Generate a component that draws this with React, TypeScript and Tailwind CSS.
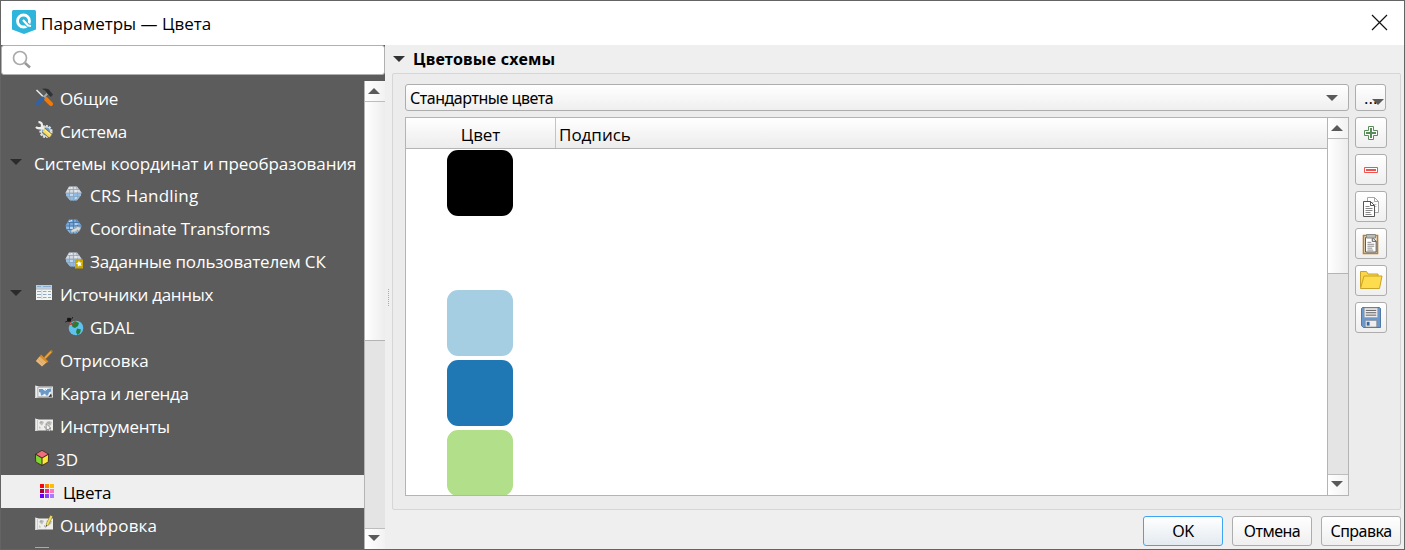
import type { ReactNode } from 'react';

const Svg = ({ children, w = 18, h = 18, box = '0 0 18 18', className = '' }: { children: ReactNode; w?: number; h?: number; box?: string; className?: string }) => (
  <svg width={w} height={h} viewBox={box} className={`shrink-0 ${className}`}>{children}</svg>
);

const ToolsIcon = () => (
  <Svg>
    <path d="M1.500 2 9 9.500" stroke="#e8e8e8" strokeWidth="1.6" />
    <path d="M10.500 10.500 16 16" stroke="#f57900" strokeWidth="4" strokeLinecap="round" />
    <path d="M12.500 5.500 8 10" stroke="#a9adb0" strokeWidth="1.8" />
    <path d="M7.500 10.500 2.500 15.500" stroke="#33629e" strokeWidth="4" strokeLinecap="round" />
    <path d="M7 1 C11 0 13.500 .5 15 3 L18 6.500 16 9 12.500 6 C12 3.500 10 2.500 7 1Z" fill="#2e3436" />
  </Svg>
);
const SystemIcon = () => (
  <Svg>
    <circle cx="11" cy="10.500" r="5.600" fill="#6e9ccb" stroke="#e4e4de" strokeWidth="2" strokeDasharray="2 1.200" />
    <circle cx="11" cy="10.500" r="4.600" fill="none" stroke="#dcdcd8" strokeWidth="1.200" />
    <path d="M1 6C3 8 5.500 7.500 7 6L10 9.500" stroke="#eeeeec" strokeWidth="2.400" fill="none" />
    <path d="M3.500 1.300C6 .8 7.500 3 6.800 5.500" stroke="#eeeeec" strokeWidth="2.200" fill="none" />
    <path d="M8.500 9 15.500 15" stroke="#77651c" strokeWidth="5" />
    <path d="M8.500 9 15.500 15" stroke="#f5dc6a" strokeWidth="3.800" />
    <path d="M10 9 15.500 13.500" stroke="#fff3a5" strokeWidth="1" />
  </Svg>
);
const GlobeIcon = ({ kind }: { kind?: 'shift' | 'star' }) => (
  <Svg className="overflow-visible">
    <path d="M4 1.500h8l4.500 6-.8 3-3.700 4.500H5L1.500 11 .6 7.500z" fill={kind === 'shift' ? '#78a8db' : '#d8dbe0'} />
    <path d="M.8 8h15.500l-.8 3-3.700 4.500H5.200L1.500 11z" fill="#8fbde8" />
    <path d="M8.400 1v15M2.500 4.500h12M.7 8h15.500M2 11.500h13M5.500 1.500C4 6 4 11 6 15.500M11.400 1.500C13 6 13 11 11 15.500" stroke={kind === 'shift' ? '#42729f' : '#8ba3ba'} strokeWidth=".8" fill="none" />
    <path d="M4 3.500 7 2.500M10 6h3M5 10h3M10 13h2" stroke="#f0f6ff" strokeWidth="1" />
    {kind === 'shift' && <path d="M5.500 14C6.500 10.500 9.500 11 11.500 9.500L11 8 16 9.500 14 13.500 12.500 12C11 14 8.500 14.500 5.500 14Z" fill="#d7dbd9" stroke="#788a91" strokeWidth=".5" />}
    {kind === 'star' && <><rect x="10" y="8.500" width="8" height="9" fill="#c9a800" /><path d="m14 9.500.8 2.100 2.200-.1-1.300 1.600 1 2-2-.7-1.900 1.300.1-2.300-1.900-1.200 2.200-.6z" fill="#fff" /></>}
  </Svg>
);
const TableIcon = () => (
  <Svg>
    <rect x="1" y="1" width="16" height="15" fill="#f2f3f3" />
    <path d="M1 1h16v3.500H1z" fill="#b4d0ec" /><path d="M2 2.500h4M8 2.500h8" stroke="#86add0" />
    <path d="M1 5h16" stroke="#8f979d" strokeWidth=".7" />
    <path d="M2 7.500h4M2 10.500h4M2 13.500h4M8 7.500h3.500M8 10.500h3.500M8 13.500h3.500M13 7.500h3M13 10.500h3M13 13.500h3" stroke="#90a9c0" strokeWidth="1" />
    <path d="M6.800 5v10" stroke="#c9d2d9" />
  </Svg>
);
const GdalIcon = () => (
  <Svg className="overflow-visible">
    <circle cx="11" cy="11" r="7.300" fill="#5fc1ee" />
    <path d="M6.500 6.500 10 4l4 2-1 3-3 2-2.500-1zM12 11.500l4 1-1 3.500-2.500 2L11 15z" fill="#277d36" />
    <path d="m3.500 3 5 6M4 8l6.500-2.500" stroke="#a7473c" strokeWidth="1" />
    <path d="M2.500 1.300h3v3h-3zM7 .7l1-.2M.2 5l2-.7M5.500 2.500l2-1" fill="#111" stroke="#111" strokeWidth=".8" />
  </Svg>
);
const BrushIcon = () => (
  <Svg>
    <path d="M16.300 1.500 10.500 7.500" stroke="#b87820" strokeWidth="2.800" strokeLinecap="round" />
    <path d="M16 1.800 10 8" stroke="#f0a63c" strokeWidth="1.500" />
    <path d="m6 4.500 7.500 7-2 1.500-7-6z" fill="#d68c29" /><path d="m4.500 6.500 7 6-4.500 4L.800 11z" fill="#e8b778" />
    <path d="m3 9 5 5M5 8.500l4 4" stroke="#d79b58" strokeWidth=".6" />
  </Svg>
);
const MapIcon = ({ kind }: { kind: 'legend' | 'tools' | 'edit' }) => (
  <Svg box="0 -1 18 18">
    <path d="M0 1.500 4 2.500h14v11H4L0 14z" fill="#eeeeec" /><path d="M.5 2v11.500M2.500 3v10" stroke="#ccc" />
    {kind === 'legend'
      ? <><path d="M3 3.500h14v9H3z" fill="#eef4fa" stroke="#b5b5b5" strokeWidth=".8" /><path d="M4 5h4l2 2 2-2 4-.500v3l-2 1-1 3h-2l-1-2-3 2H6l-.5-3L4 8z" fill="#6b99c7" /><path d="M8 5l3 1 1-1" stroke="#fff" /><path d="m16 9.500-2.500 3.500 3.500-.5z" fill="#333" /></>
      : <><path d="M4 5.500 7 4l2 1-1 2-1 1.500L5 7zM9 9l2 1-.5 3zM11 5l3-1 3 1-1 3-2 1-1-2zM4 9l2 2-1.500 1z" fill="#bdbdba" /><path d="M5 5h2M12 6h3M9 10h1" stroke="#9c9e9a" /></>}
    {kind === 'tools' && <path d="m11 6.500.4 7 1.700-1.500L14.500 14.500l1.200-.7-1.400-2.500H16z" fill="#f4f4f4" stroke="#555" strokeWidth=".6" />}
    {kind === 'edit' && <><path d="M16.500 0 12 9" stroke="#9a851b" strokeWidth="3" /><path d="M16.500 0 12 9" stroke="#f0dc66" strokeWidth="1.900" /><path d="m10.800 11.300.3-2.800 1.500.9z" fill="#555" /></>}
  </Svg>
);
const CubeIcon = () => (
  <Svg w={14} h={16} box="0 0 14 16">
    <path d="M7 0 14 4 13.500 12 7 16 .5 12 0 4z" fill="#3d2a20" />
    <path d="m7 .8 5.700 3.300L7 7.400 1.300 4.100z" fill="#f26d7b" /><path d="M.9 5.100 6.500 8.300v6.500L1.200 11.700z" fill="#7fd82c" /><path d="m13.100 5.100-5.600 3.200v6.500l5.300-3.100z" fill="#fce83a" />
  </Svg>
);
const PaletteIcon = () => (
  <div className="grid grid-cols-3 gap-px">
    <i className="size-[4px] bg-[#f80808]" /><i className="size-[4px] bg-[#fb8b00]" /><i className="size-[4px] bg-[#ffbd00]" />
    <i className="size-[4px] bg-[#a8003d]" /><i className="size-[4px] bg-[#e92e93]" /><i className="size-[4px] bg-[#ff78bd]" />
    <i className="size-[4px] bg-[#6900ff]" /><i className="size-[4px] bg-[#8745f5]" /><i className="size-[4px] bg-[#a97bff]" />
  </div>
);

const Arrow = ({ up, color = '#5a5a5a' }: { up?: boolean; color?: string }) => (
  <Svg w={12} h={6} box="0 0 12 6"><path d={up ? 'M6 0 12 6H0z' : 'M0 0h12L6 6z'} fill={color} /></Svg>
);

type Row = { label: string; text?: string; icon?: ReactNode; child?: boolean; open?: boolean; height?: string; pad: string; selected?: boolean; iconBox?: string };
const rows: Row[] = [
  { label: 'Общие', text: 'tracking-[-0.15px]', icon: <ToolsIcon />, pad: 'pl-[34px]' },
  { label: 'Система', text: 'tracking-[-0.3px]', icon: <SystemIcon />, pad: 'pl-[34px]' },
  { label: 'Системы координат и преобразования', text: 'tracking-[-0.06px]', open: true, height: 'h-8', pad: 'pl-[33px]' },
  { label: 'CRS Handling', text: 'tracking-[0.2px]', icon: <GlobeIcon />, height: 'h-8', pad: 'pl-[64px]' },
  { label: 'Coordinate Transforms', text: 'tracking-[-0.18px]', icon: <GlobeIcon kind="shift" />, pad: 'pl-[64px]' },
  { label: 'Заданные пользователем СК', text: 'tracking-[-0.18px]', icon: <GlobeIcon kind="star" />, pad: 'pl-[64px]' },
  { label: 'Источники данных', text: 'tracking-[-0.3px]', icon: <TableIcon />, open: true, pad: 'pl-[34px]' },
  { label: 'GDAL', icon: <GdalIcon />, pad: 'pl-[64px]' },
  { label: 'Отрисовка', icon: <BrushIcon />, pad: 'pl-[34px]' },
  { label: 'Карта и легенда', text: 'tracking-[-0.32px]', icon: <MapIcon kind="legend" />, pad: 'pl-[34px]' },
  { label: 'Инструменты', text: 'tracking-[-0.25px]', icon: <MapIcon kind="tools" />, pad: 'pl-[34px]' },
  { label: '3D', icon: <CubeIcon />, pad: 'pl-[34px]', iconBox: 'w-[21px]' },
  { label: 'Цвета', text: 'tracking-[-0.2px]', icon: <PaletteIcon />, pad: 'pl-[39px]', selected: true, iconBox: 'w-[23px]' },
  { label: 'Оцифровка', text: 'tracking-[0.2px]', icon: <MapIcon kind="edit" />, pad: 'pl-[34px]' },
];

const TreeRow = ({ r }: { r: Row }) => (
  <div className={`relative flex shrink-0 items-center ${r.height ?? 'h-[33px]'} ${r.pad} ${r.selected ? 'bg-[#efefef] text-black' : 'text-white'}`}>
    {r.open && <span className="absolute left-[9px] top-1/2 -mt-[4px] flex"><Arrow color="#2b2b2b" /></span>}
    {r.icon && <span className={`flex shrink-0 pb-[2px] ${r.iconBox ?? 'w-[25px]'}`}>{r.icon}</span>}
    <span className={`whitespace-nowrap pt-[2px] leading-6 ${r.text ?? ''}`}>{r.label}</span>
  </div>
);

const ScrollBar = ({ thumb }: { thumb: string }) => (
  <div className="flex w-[21px] shrink-0 flex-col border-l border-[#b4b4b4] bg-[#e4e4e4]">
    <div className="flex h-[21px] shrink-0 items-center justify-center border-b border-[#bdbdbd] bg-linear-to-r from-white to-[#f2f2f2] pr-[2px]"><Arrow up /></div>
    <div className={`shrink-0 border-b border-[#b4b4b4] bg-linear-to-r from-white to-[#ededed] ${thumb}`} />
    <div className="grow" />
    <div className="flex h-[21px] shrink-0 items-center justify-center border-t border-[#bdbdbd] bg-linear-to-r from-white to-[#f2f2f2] pb-[3px] pr-[2px]"><Arrow /></div>
  </div>
);

const btn = 'flex items-center justify-center rounded-[3px] border border-[#adadad] bg-linear-to-b from-white to-[#efefef]';

const Doc = ({ x, y, c, s = 1 }: { x: number; y: number; c: string; s?: number }) => (
  <g transform={`translate(${x} ${y}) scale(${s})`}><path d="M.5.5h7l4 4v11H.5z" fill="#fff" stroke={c} /><path d="M7.500.5v4h4" fill="none" stroke={c} /><path d="M2.500 5.500h4M2.500 7.500h7M2.500 9.500h7M2.500 11.500h5M2.500 13.500h6" stroke={c} strokeWidth=".7" /></g>
);
const sideIcons: ReactNode[] = [
  <Svg key="add" w={14} h={14} box="0 0 14 14"><path d="M4.500.5h5v4h4v5h-4v4h-5v-4h-4v-5h4z" fill="#fff" stroke="#5a8c5a" /><path d="M6 2h2v4h4v2H8v4H6V8H2V6h4z" fill="#5a8c5a" /></Svg>,
  <Svg key="remove" w={14} h={6} box="0 0 14 6"><path d="M.5.5h13v5H.5z" fill="#fff" stroke="#ef5350" /><path d="M2 2h10v2H2z" fill="#ef5350" /></Svg>,
  <Svg key="copy" w={16} h={20} box="0 0 16 20"><Doc x={4} y={0} c="#a5a5a5" /><Doc x={0} y={4} c="#555" /></Svg>,
  <Svg key="paste" w={18} h={22} box="0 0 18 22"><path d="M1.500 2.500h14v18h-14z" fill="#ececec" stroke="#bf7f24" strokeWidth="1.600" /><Doc x={3} y={4} c="#555" s={0.97} /><path d="M4.500 1.500h9v3.500h-9z" fill="#babdb6" stroke="#888a85" /></Svg>,
  <Svg key="open" w={23} h={19} box="0 0 23 19"><path d="M.5 16.500V.5h6l1.500 2.500h10v4" fill="#fbd54b" stroke="#c8a327" /><path d="m.5 17.500 3.500-12.500h18l-2.500 12.500z" fill="#fddc4e" stroke="#c8a327" /></Svg>,
  <Svg key="save" w={20} h={22} box="0 0 21 23"><path d="M1.500.5h18l1 1v20H2.500l-2-2v-18z" fill="#6c99cd" stroke="#4b72a0" /><path d="M3.500 1h14v10h-14z" fill="#eee" stroke="#999" strokeWidth=".6" /><path d="M5 3.500h11M5 6h11M5 8.500h11" stroke="#555" /><path d="M4.500 14h12v7h-12z" fill="#eee" stroke="#777" strokeWidth=".6" /><path d="M6 15.500h3v4H6z" fill="#3b689b" /></Svg>,
];

const swatches = ['bg-black', 'bg-white', 'bg-[#a6cee3]', 'bg-[#1f78b4]', 'bg-[#b2df8a]'];

export default function App() {
  return (
    <div className="flex h-[550px] w-[1405px] flex-col overflow-hidden border border-[#646464] bg-[#efefef] font-['Open_Sans','Noto_Sans',sans-serif] text-[17px] text-black">
      <header className="flex h-11 shrink-0 items-center bg-white pl-[11px] pr-4">
        <Svg w={24} h={24} box="0 0 24 24" className="-mt-[3px]">
          <path d="M1.500 0h21Q24 0 24 1.500V19.500L12 24 0 19.500V1.500Q0 0 1.500 0Z" fill="#2fb5dc" />
          <circle cx="11.500" cy="11" r="6" fill="none" stroke="#fff" strokeWidth="2.800" />
          <path d="m11 10.500 4 4 4 2.500" stroke="#2fb5dc" strokeWidth="4.200" fill="none" /><path d="m11 10 5 5.500 3 .5" stroke="#fff" strokeWidth="2.200" fill="none" />
        </Svg>
        <h1 className="grow pl-[5px] pt-px">Параметры — Цвета</h1>
        <Svg w={17} h={17} box="0 0 17 17" className="-mt-px"><path d="m1 1 15 15M16 1 1 16" stroke="#111" strokeWidth="1.200" /></Svg>
      </header>

      <div className="flex min-h-0 grow">
        <aside className="flex w-[384px] shrink-0 flex-col bg-[#5c5c5c]">
          <div className="flex h-[30px] shrink-0 items-center rounded-[3px] border border-[#b0b0b0] bg-white pl-[10px]">
            <Svg w={20} h={20} box="0 0 20 20"><circle cx="8" cy="8" r="6.500" fill="none" stroke="#aaa" strokeWidth="1.700" /><path d="m13 13 5 4.500" stroke="#999" strokeWidth="2.600" /></Svg>
          </div>
          <div className="flex min-h-0 grow pt-[6px]">
            <nav className="flex min-w-0 grow flex-col overflow-hidden">
              {rows.map((r) => <TreeRow key={r.label} r={r} />)}
              <div className="flex pl-[34px] pt-[6px]"><span className="h-px w-[14px] bg-[#aaa]" /></div>
            </nav>
            <ScrollBar thumb="h-[239px]" />
          </div>
        </aside>

        <div className="flex w-[7px] shrink-0 items-center justify-center">
          <div className="mb-0 h-[17px] border-l border-dotted border-[#aaa]" />
        </div>

        <main className="flex min-w-0 grow flex-col pr-[2px]">
          <div className="flex h-7 shrink-0 items-center pl-[1px]">
            <Arrow color="#333" />
            <h2 className="pl-2 font-['Noto_Sans',sans-serif] text-[16px] font-bold leading-6 tracking-[0.22px]">Цветовые схемы</h2>
          </div>
          <section className="flex h-[437px] w-[1009px] shrink-0 rounded-[2px] border border-[#d6d6d6] bg-[#ececec] pl-3 pt-[10px]">
            <div className="flex w-[944px] shrink-0 flex-col">
              <div className="flex h-[27px] shrink-0 items-center justify-between rounded-[3px] border border-[#adadad] bg-linear-to-b from-white to-[#efefef] pl-[4px] pr-[10px]">
                <span className="font-['Noto_Sans',sans-serif] text-[16px] leading-6 tracking-[-0.45px]">Стандартные цвета</span>
                <Arrow />
              </div>
              <div className="mt-[6px] flex h-[379px] border border-[#b4b4b4] bg-white">
                <div className="flex min-w-0 grow flex-col overflow-hidden">
                  <div className="flex h-[31px] shrink-0 border-b border-[#b4b4b4] bg-linear-to-b from-white to-[#ececec] leading-[33px]">
                    <div className="w-[150px] border-r border-[#c4c4c4] text-center tracking-[-0.1px]">Цвет</div>
                    <div className="pl-[3px]">Подпись</div>
                  </div>
                  {swatches.map((s) => (
                    <div key={s} className="flex h-[70px] w-[148px] shrink-0 justify-center pt-px"><div className={`size-[66px] rounded-[11px] ${s}`} /></div>
                  ))}
                </div>
                <ScrollBar thumb="h-[135px]" />
              </div>
            </div>
            <div className="flex flex-col gap-[6px] pl-[6px]">
              <button className={`${btn} relative h-[27px] w-[31px]`}>
                <span className="absolute left-[8px] top-[3px] leading-5">...</span>
                <span className="absolute left-[16px] top-[14px] flex"><Arrow /></span>
              </button>
              {sideIcons.map((icon, i) => <button key={i} className={`${btn} h-[31px] w-8`}>{icon}</button>)}
            </div>
          </section>
          <footer className="mt-[6px] flex justify-end gap-[9px] pr-px font-['Noto_Sans',sans-serif] text-[16px] tracking-[-0.5px]">
            <button className="flex h-[30px] w-[80px] items-center justify-center rounded-[3px] border border-[#3da5f4] bg-linear-to-b from-white to-[#e3eaf0]">OK</button>
            <button className={`${btn} h-[30px] w-[80px]`}>Отмена</button>
            <button className={`${btn} h-[30px] w-[80px]`}>Справка</button>
          </footer>
        </main>
      </div>
    </div>
  );
}
